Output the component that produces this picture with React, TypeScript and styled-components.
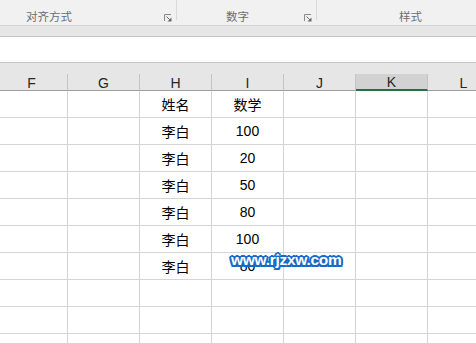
import styled, { createGlobalStyle } from "styled-components";

const GlobalStyle = createGlobalStyle`
  html, body {
    margin: 0;
    padding: 0;
    background: #ffffff;
  }
  * {
    box-sizing: border-box;
  }
`;

const columns = ["F", "G", "H", "I", "J", "K", "L"];
const activeColumn = "K";

const data: { name: string; score: string }[] = [
  { name: "姓名", score: "数学" },
  { name: "李白", score: "100" },
  { name: "李白", score: "20" },
  { name: "李白", score: "50" },
  { name: "李白", score: "80" },
  { name: "李白", score: "100" },
  { name: "李白", score: "80" },
  { name: "", score: "" },
  { name: "", score: "" },
  { name: "", score: "" },
];

const Launcher = () => (
  <LauncherIcon width="8" height="8" viewBox="0 0 8 8">
    <path d="M0.5 7V0.5H7" fill="none" stroke="#8a8a8a" strokeWidth="1" />
    <path d="M2.5 2.5L6 6" stroke="#6a6a6a" strokeWidth="1" />
    <path d="M7.5 3.5V7.5H3.5Z" fill="#6a6a6a" />
  </LauncherIcon>
);

const App = () => {
  return (
    <Page>
      <GlobalStyle />
      <Ribbon>
        <Group width={177} padLeft={26} divider>
          <GroupLabel>对齐方式</GroupLabel>
          <Launcher />
        </Group>
        <Group width={140} padLeft={49} divider>
          <GroupLabel>数字</GroupLabel>
          <Launcher />
        </Group>
        <Group width={159} padLeft={82}>
          <GroupLabel>样式</GroupLabel>
        </Group>
      </Ribbon>
      <Band />
      <FormulaBar />
      <HeaderArea>
        <ColumnRow>
          {columns.map((c) => (
            <HeaderCell key={c} active={c === activeColumn}>
              {c}
            </HeaderCell>
          ))}
        </ColumnRow>
      </HeaderArea>
      <Sheet>
        {data.map((row, i) => (
          <ColumnRow key={i}>
            {columns.map((c) => (
              <Cell key={c}>
                {c === "H" ? row.name : c === "I" ? row.score : ""}
              </Cell>
            ))}
          </ColumnRow>
        ))}
        <Watermark>www.rjzxw.com</Watermark>
      </Sheet>
    </Page>
  );
};

const Page = styled.div`
  width: 476px;
  height: 343px;
  overflow: hidden;
  font-family: "Liberation Sans", "Noto Sans CJK SC", sans-serif;
  background: #ffffff;
`;

const Ribbon = styled.div`
  display: flex;
  height: 26px;
  background: #f1f1f1;
  border-bottom: 1px solid #d6d6d6;
`;

const Group = styled.div<{ width: number; padLeft: number; divider?: boolean }>`
  flex: 0 0 ${(p) => p.width}px;
  display: flex;
  align-items: flex-start;
  justify-content: space-between;
  padding: 9px 4px 0 ${(p) => p.padLeft}px;
  height: 20px;
  border-right: ${(p) => (p.divider ? "1px solid #dadada" : "none")};
`;

const GroupLabel = styled.span`
  font-family: "Noto Sans CJK SC", sans-serif;
  font-size: 11.5px;
  line-height: 14px;
  color: #6e6e6e;
`;

const LauncherIcon = styled.svg`
  margin-top: 5px;
  flex: none;
`;

const Band = styled.div`
  height: 11px;
  background: #e6e6e6;
  border-bottom: 1px solid #c6c6c6;
`;

const FormulaBar = styled.div`
  height: 26px;
  background: #ffffff;
  border-bottom: 1px solid #c6c6c6;
`;

const HeaderArea = styled.div`
  height: 28px;
  padding-top: 11px;
  background: #e6e6e6;
`;

const ColumnRow = styled.div`
  display: grid;
  grid-template-columns: repeat(7, 72px);
  margin-left: -4px;
`;

const HeaderCell = styled.div<{ active: boolean }>`
  height: 17px;
  display: flex;
  align-items: center;
  justify-content: center;
  font-size: 14px;
  color: #262626;
  background: ${(p) => (p.active ? "#d2d2d2" : "#e6e6e6")};
  border-right: 1px solid #c3c3c3;
  border-bottom: ${(p) => (p.active ? "2px solid #217346" : "1px solid #9f9f9f")};
  padding-top: 1px;
`;

const Sheet = styled.div`
  position: relative;
`;

const Cell = styled.div`
  height: 27px;
  display: flex;
  align-items: center;
  justify-content: center;
  font-size: 14px;
  color: #000000;
  border-right: 1px solid #d4d4d4;
  border-bottom: 1px solid #d4d4d4;
  font-family: "Liberation Sans", "Noto Sans CJK SC", sans-serif;
`;

const Watermark = styled.div`
  position: absolute;
  left: 231px;
  top: 160px;
  font-family: "Liberation Sans", sans-serif;
  font-weight: bold;
  font-size: 15.5px;
  letter-spacing: -0.3px;
  color: #ffffff;
  text-shadow: -2px 0 #1769c4, 2px 0 #1769c4, 0 -2px #1769c4, 0 2px #1769c4,
    -1.5px -1.5px #1769c4, 1.5px 1.5px #1769c4, -1.5px 1.5px #1769c4, 1.5px -1.5px #1769c4,
    0 0 3px #4aa0f0;
`;

export default App;
